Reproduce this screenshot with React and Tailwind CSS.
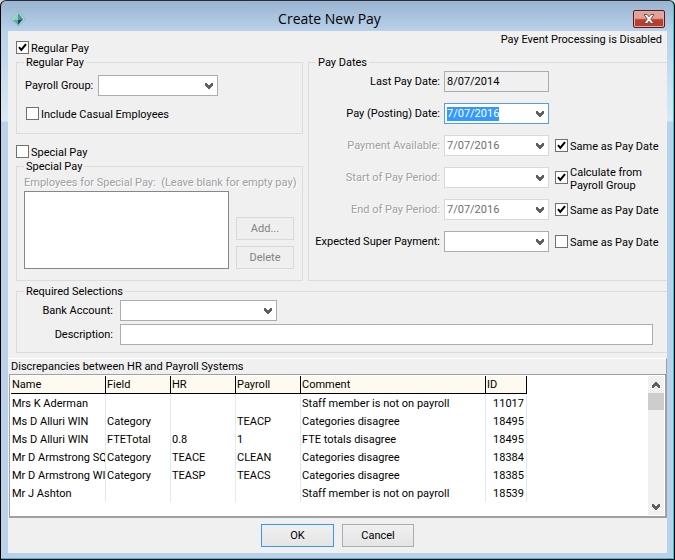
import { useEffect, useRef, useState } from 'react'

const COLUMNS = ['Name', 'Field', 'HR', 'Payroll', 'Comment', 'ID']

const DISCREPANCIES = [
  ['Mrs K Aderman', '', '', '', 'Staff member is not on payroll', '11017'],
  ['Ms D Alluri WIN', 'Category', '', 'TEACP', 'Categories disagree', '18495'],
  ['Ms D Alluri WIN', 'FTETotal', '0.8', '1', 'FTE totals disagree', '18495'],
  ['Mr D Armstrong SQ', 'Category', 'TEACE', 'CLEAN', 'Categories disagree', '18384'],
  ['Mr D Armstrong WI', 'Category', 'TEASP', 'TEACS', 'Categories disagree', '18385'],
  ['Mr J Ashton', '', '', '', 'Staff member is not on payroll', '18539'],
]

const DATE_ROWS = [
  { id: 'available', label: 'Payment Available:', value: '7/07/2016', disabled: true, check: 'Same as Pay Date', checked: true },
  { id: 'start', label: 'Start of Pay Period:', value: '', disabled: true, check: 'Calculate from Payroll Group', checked: true },
  { id: 'end', label: 'End of Pay Period:', value: '7/07/2016', disabled: true, check: 'Same as Pay Date', checked: true },
  { id: 'super', label: 'Expected Super Payment:', value: '', disabled: false, check: 'Same as Pay Date', checked: false },
]

function Chevron({ className = '' }) {
  return (
    <svg viewBox="0 0 8 6" className={`h-[6px] w-[8px] ${className}`} aria-hidden="true">
      <path d="M0 0h2v1h1v1h2V1h1V0h2v3H7v1H6v1H5v1H3V5H2V4H1V3H0z" fill="#606060" />
    </svg>
  )
}

function Checkbox({ id, label, checked, className = '' }) {
  const [on, setOn] = useState(!!checked)
  return (
    <div className={`flex h-[13px] items-center gap-[2px] ${className}`}>
      <span className="relative h-[13px] w-[13px] shrink-0">
        <input
          id={id}
          type="checkbox"
          checked={on}
          onChange={(e) => setOn(e.target.checked)}
          className="block h-[13px] w-[13px] appearance-none border border-[#707070] bg-white"
        />
        {on && (
          <svg viewBox="0 0 13 13" className="pointer-events-none absolute inset-0 h-[13px] w-[13px]" aria-hidden="true">
            <path d="M3 6.2L5.3 9L10 3.2" fill="none" stroke="#000" strokeWidth="2" />
          </svg>
        )}
      </span>
      <label htmlFor={id} className="max-w-[92px] pt-[2px] leading-[13px] has-[span]:max-w-none">
        {label}
      </label>
    </div>
  )
}

function Group({ title, className = '', children }) {
  return (
    <fieldset className={`min-w-0 border border-[#dcdcdc] ${className}`}>
      <legend className="ml-[7px] h-[14px] px-[2px] leading-[16px]">{title}</legend>
      {children}
    </fieldset>
  )
}

function SelectBox({ id, className = '' }) {
  return (
    <span className={`relative block h-[21px] ${className}`}>
      <select id={id} className="block h-[21px] w-full appearance-none border border-[#abadb3] bg-white px-[3px] outline-none">
        <option value="" />
      </select>
      <Chevron className="pointer-events-none absolute top-[8px] right-[5px]" />
    </span>
  )
}

function DateBox({ id, value, disabled, active }) {
  const ref = useRef(null)

  useEffect(() => {
    if (active) {
      ref.current.focus()
      ref.current.select()
    }
  }, [active])

  const border = active ? 'border-[#569de5]' : disabled ? 'border-[#d9d9d9]' : 'border-[#abadb3]'

  return (
    <span className={`flex h-[21px] w-[105px] shrink-0 items-center border bg-white ${border}`}>
      <input
        id={id}
        ref={ref}
        type="text"
        defaultValue={value}
        disabled={disabled}
        className="min-w-0 flex-1 pl-[2px] outline-none selection:bg-[#3399ff] selection:text-white disabled:text-[#6d6d6d]"
      />
      <button type="button" aria-label="Open calendar" disabled={disabled} className="flex h-full w-[17px] items-center justify-center">
        <Chevron />
      </button>
    </span>
  )
}

function DateLabel({ id, disabled, children }) {
  return (
    <label
      htmlFor={id}
      className={`w-[131px] shrink-0 text-right whitespace-nowrap ${
        disabled ? 'text-[#a0a0a0] [text-shadow:1px_1px_0_#fff]' : ''
      }`}
    >
      {children}
    </label>
  )
}

function TitleBar() {
  return (
    <header className="flex h-[30px] items-center pt-[6px] pr-[2px] pl-[2px]">
      <svg viewBox="0 0 16 16" className="h-[16px] w-[16px]" aria-hidden="true">
        <path d="M8 0.5L15.5 8L8 15.5L0.5 8z" fill="#a9d6d8" stroke="#7fbcc6" />
        <path d="M8 2L3 9H8z" fill="#8fd0bb" />
        <path d="M8 2L13 8L8 9z" fill="#4d9793" />
        <path d="M3 9H8V14z" fill="#5fa8a6" />
        <path d="M8 9L13 8L8 14z" fill="#2f3f63" />
      </svg>
      <h1 className="flex-1 text-center font-['Open_Sans',sans-serif] text-[14px] leading-[20px]">Create New Pay</h1>
      <button
        type="button"
        aria-label="Close"
        className="flex h-[18px] w-[32px] items-center justify-center rounded-[2px] border border-[#4d1f22] bg-linear-to-b from-[#e2a297] from-45% to-[#b93f2c] to-55% shadow-[inset_0_0_0_1px_#e6aaa0]"
      >
        <svg viewBox="0 0 12 10" className="h-[10px] w-[12px]" aria-hidden="true">
          <path d="M1 0.5H4.2L6 2.8L7.8 0.5H11L7.8 5L11 9.5H7.8L6 7.2L4.2 9.5H1L4.2 5z" fill="#f4f4f4" stroke="#5a4a50" strokeWidth="0.9" />
        </svg>
      </button>
    </header>
  )
}

function DiscrepancyTable() {
  return (
    <div className="flex min-h-[143px] flex-1 border border-b-2 border-[#a0a0a0] bg-white p-px">
      <div className="min-w-0 flex-1 overflow-hidden">
        <table className="w-[516px] table-fixed border-separate border-spacing-0 text-left">
          <colgroup>
            <col className="w-[95px]" />
            <col className="w-[65px]" />
            <col className="w-[65px]" />
            <col className="w-[65px]" />
            <col className="w-[185px]" />
            <col className="w-[41px]" />
          </colgroup>
          <thead>
            <tr>
              {COLUMNS.map((c) => (
                <th key={c} scope="col" className="h-[18px] border-r border-b border-black bg-[#fffaf0] px-px leading-[17px] font-normal">
                  {c}
                </th>
              ))}
            </tr>
          </thead>
          <tbody>
            {DISCREPANCIES.map((row, i) => (
              <tr key={i}>
                {row.map((cell, j) => (
                  <td
                    key={j}
                    className={`h-[18px] overflow-hidden border-r border-[#dcebf8] pt-[2px] leading-[16px] whitespace-nowrap ${
                      j === 5 ? 'pr-[2px] text-right' : 'pl-px'
                    }`}
                  >
                    {cell}
                  </td>
                ))}
              </tr>
            ))}
          </tbody>
        </table>
      </div>
      <div className="flex w-[16px] flex-col items-center bg-[#f0f0f0]">
        <button type="button" aria-label="Scroll up" className="flex h-[17px] w-full items-center justify-center">
          <Chevron className="rotate-180" />
        </button>
        <div className="h-[17px] w-full bg-[#cdcdcd]" />
        <button type="button" aria-label="Scroll down" className="mt-auto flex h-[17px] w-full items-center justify-center">
          <Chevron />
        </button>
      </div>
    </div>
  )
}

export default function App() {
  return (
    <div className="bg-[#d8d8d8]">
      <div className="flex min-h-screen flex-col rounded-t-[6px] border border-t-[#2b2b33] border-r-black border-b-black border-l-black bg-[linear-gradient(to_bottom,#99b4d1_0px,#b9d1ea_30px,#dbe8f5_120px,#b9d1ea_121px)] px-[7px] pb-[6px] font-['Roboto','Noto_Sans',sans-serif] text-[11px] leading-[14px] text-black shadow-[inset_-1px_-1px_0_#2bc4dc]">
        <TitleBar />
        <main className="flex flex-1 flex-col bg-[#f0f0f0]">
          <div className="flex gap-[5px] pl-[8px]">
            {/* Regular and special pay */}
            <div className="w-[287px] shrink-0 pt-[10px]">
              <Checkbox id="regular" label={<span>Regular Pay</span>} checked />
              <Group title="Regular Pay" className="mt-px pb-[13px]">
                <div className="flex items-center gap-[5px] pt-[6px] pr-[84px] pl-[8px]">
                  <label htmlFor="payroll-group" className="w-[68px] shrink-0 whitespace-nowrap">Payroll Group:</label>
                  <SelectBox id="payroll-group" className="flex-1" />
                </div>
                <Checkbox id="casual" label={<span>Include Casual Employees</span>} className="mt-[11px] ml-[9px]" />
              </Group>

              <Checkbox id="special" label={<span>Special Pay</span>} className="mt-[11px]" />
              <Group title="Special Pay" className="mt-px">
                <div className="pr-[8px] pb-[11px] pl-[7px]">
                  <label htmlFor="special-employees" className="block pt-[3px] whitespace-pre text-[#a0a0a0] [text-shadow:1px_1px_0_#fff]">
                    {'Employees for Special Pay:  (Leave blank for empty pay)'}
                  </label>
                  <div className="mt-px flex items-end gap-[7px]">
                    <textarea id="special-employees" className="block h-[78px] min-w-0 flex-1 resize-none border border-[#828790] bg-white outline-none" />
                    <div className="flex w-[58px] flex-col gap-[6px]">
                      <button type="button" disabled className="h-[23px] border border-[#d9d9d9] bg-[#efefef] text-[#838383]">Add...</button>
                      <button type="button" disabled className="h-[23px] border border-[#d9d9d9] bg-[#efefef] text-[#838383]">Delete</button>
                    </div>
                  </div>
                </div>
              </Group>
            </div>

            {/* Pay dates */}
            <div className="flex min-w-0 flex-1 flex-col">
              <p className="h-[24px] pt-[2px] pr-[5px] text-right">Pay Event Processing is Disabled</p>
              <Group title="Pay Dates" className="flex-1 border-r-0">
                <div className="flex flex-col gap-[11px] pt-[2px]">
                  <div className="flex h-[21px] items-center gap-[4px]">
                    <DateLabel id="last">Last Pay Date:</DateLabel>
                    <input
                      id="last"
                      type="text"
                      readOnly
                      defaultValue="8/07/2014"
                      className="h-[21px] w-[105px] border border-[#abadb3] bg-[#f0f0f0] px-[2px] outline-none"
                    />
                  </div>
                  <div className="flex h-[21px] items-center gap-[4px]">
                    <DateLabel id="posting">Pay (Posting) Date:</DateLabel>
                    <DateBox id="posting" value="7/07/2016" active />
                  </div>
                  {DATE_ROWS.map((r) => (
                    <div key={r.id} className="flex h-[21px] items-center gap-[4px]">
                      <DateLabel id={r.id} disabled={r.disabled}>{r.label}</DateLabel>
                      <DateBox id={r.id} value={r.value} disabled={r.disabled} />
                      <Checkbox id={`${r.id}-check`} label={r.check} checked={r.checked} className="ml-[2px]" />
                    </div>
                  ))}
                </div>
              </Group>
            </div>
          </div>

          <Group title="Required Selections" className="mt-[3px] ml-[8px] border-r-0 pr-[14px] pb-[7px]">
            <div className="flex flex-col gap-[3px] pt-[2px]">
              <div className="flex items-center gap-[7px]">
                <label htmlFor="bank" className="w-[96px] shrink-0 text-right">Bank Account:</label>
                <SelectBox id="bank" className="w-[157px]" />
              </div>
              <div className="flex items-center gap-[7px]">
                <label htmlFor="description" className="w-[96px] shrink-0 text-right">Description:</label>
                <input id="description" type="text" className="h-[21px] min-w-0 flex-1 border border-[#abadb3] bg-white px-[3px] outline-none" />
              </div>
            </div>
          </Group>

          <section className="mt-[5px] flex flex-1 flex-col border-t border-r border-t-white border-r-[#a0a0a0] pl-px">
            <h2 className="h-[15px] pl-[2px] leading-[15px]">Discrepancies between HR and Payroll Systems</h2>
            <DiscrepancyTable />
          </section>

          <footer className="flex justify-center gap-[8px] py-[6px]">
            <button type="button" className="h-[23px] w-[73px] border border-[#3399ff] bg-linear-to-b from-[#f0f0f0] to-[#e5e5e5]">OK</button>
            <button type="button" className="h-[23px] w-[72px] border border-[#acacac] bg-linear-to-b from-[#f0f0f0] to-[#e5e5e5]">Cancel</button>
          </footer>
        </main>
      </div>
    </div>
  )
}
